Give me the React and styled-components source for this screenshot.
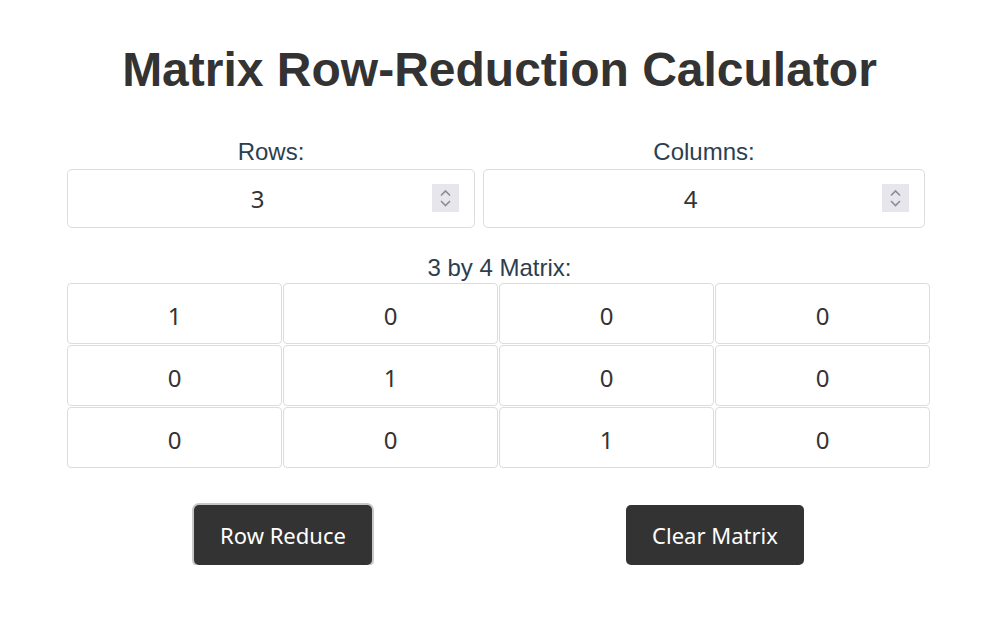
import React, { useState } from 'react';
import styled, { createGlobalStyle } from 'styled-components';

const GlobalStyle = createGlobalStyle`
  body {
    margin: 0;
    background: #fff;
    font-family: 'Liberation Sans', Arial, sans-serif;
  }
`;

const Page = styled.div`
  width: 865px;
  margin: 0 auto;
  padding-top: 42px;
  text-align: center;
  color: #2c3e50;
`;

const Title = styled.h1`
  margin: 0;
  font-size: 48px;
  line-height: 56px;
  font-weight: 700;
  color: #333;
`;

const Controls = styled.div`
  display: grid;
  grid-template-columns: 408px 442px;
  column-gap: 8px;
  margin-top: 43px;
`;

const Field = styled.div`
  display: flex;
  flex-direction: column;
  align-items: center;
  gap: 6px;
`;

const Label = styled.label`
  display: block;
  font-size: 24px;
  line-height: 22px;
  color: #2c3e50;
`;

const SizeBox = styled.div`
  position: relative;
  width: 100%;
`;

const SizeInput = styled.input`
  box-sizing: border-box;
  width: 100%;
  height: 59px;
  padding: 0 39px 0 12px;
  border: 1px solid #dcdcdc;
  border-radius: 5px;
  background: #fff;
  font-family: 'Noto Sans', 'Open Sans', sans-serif;
  font-size: 24px;
  color: #333;
  text-align: center;
  outline: none;
`;

// number spinner drawn over the right end of the input
const Spinner = styled.span`
  position: absolute;
  right: 16px;
  top: 15px;
  width: 27px;
  height: 28px;
  background: #e6e6ec;
  display: flex;
  align-items: center;
  justify-content: center;
`;

const MatrixLabel = styled.div`
  margin-top: 29px;
  margin-bottom: 4px;
  font-size: 24px;
  line-height: 22px;
  color: #2c3e50;
`;

const Grid = styled.div`
  display: grid;
  grid-template-columns: repeat(${(p) => p.cols}, 215px);
  grid-auto-rows: 61px;
  gap: 1px;
`;

const Cell = styled.input`
  box-sizing: border-box;
  width: 100%;
  height: 100%;
  border: 1px solid #dcdcdc;
  border-radius: 4px;
  background: #fff;
  font-family: 'Noto Sans', 'Open Sans', sans-serif;
  font-size: 24px;
  color: #333;
  text-align: center;
  padding: 4px 0 0;
  outline: none;
`;

const Actions = styled.div`
  display: flex;
  width: 864px;
  margin-top: 37px;
`;

const ActionSlot = styled.div`
  flex: 1;
  display: flex;
  justify-content: center;
`;

const Button = styled.button`
  height: 60px;
  padding: 0 26px;
  border: none;
  border-radius: 5px;
  background: #333;
  color: #fff;
  font-family: 'Noto Sans', 'Open Sans', sans-serif;
  font-size: 22px;
  cursor: pointer;
  box-shadow: ${(p) => (p.$focused ? '0 0 0 2px #c8c8c8' : 'none')};
`;

function SpinIcon() {
  return (
    <svg width='27' height='28' viewBox='0 0 27 28'>
      <path
        d='M9 11.5 L13.5 7 L18 11.5 M9 17 L13.5 21.5 L18 17'
        fill='none'
        stroke='#8c8c99'
        strokeWidth='1.6'
      />
    </svg>
  );
}

export default function App() {
  let [rows, setRows] = useState(3);
  let [cols, setCols] = useState(4);
  let [matrix, setMatrix] = useState([
    [1, 0, 0, 0],
    [0, 1, 0, 0],
    [0, 0, 1, 0],
  ]);

  function handleCell(r, c, value) {
    setMatrix((prev) =>
      prev.map((row, i) => row.map((v, j) => (i === r && j === c ? value : v)))
    );
  }

  function handleClear() {
    setMatrix(matrix.map((row) => row.map(() => 0)));
  }

  return (
    <>
      <GlobalStyle />
      <Page>
        <Title>Matrix Row-Reduction Calculator</Title>
        <Controls>
          <Field>
            <Label>Rows:</Label>
            <SizeBox>
              <SizeInput
                type='text'
                value={rows}
                onChange={(e) => setRows(e.target.value)}
              />
              <Spinner>
                <SpinIcon />
              </Spinner>
            </SizeBox>
          </Field>
          <Field>
            <Label>Columns:</Label>
            <SizeBox>
              <SizeInput
                type='text'
                value={cols}
                onChange={(e) => setCols(e.target.value)}
              />
              <Spinner>
                <SpinIcon />
              </Spinner>
            </SizeBox>
          </Field>
        </Controls>
        <MatrixLabel>
          {rows} by {cols} Matrix:
        </MatrixLabel>
        <Grid cols={4}>
          {matrix.map((row, r) =>
            row.map((v, c) => (
              <Cell
                key={r + '-' + c}
                type='text'
                value={v}
                onChange={(e) => handleCell(r, c, e.target.value)}
              />
            ))
          )}
        </Grid>
        <Actions>
          <ActionSlot>
            <Button $focused>Row Reduce</Button>
          </ActionSlot>
          <ActionSlot>
            <Button onClick={handleClear}>Clear Matrix</Button>
          </ActionSlot>
        </Actions>
      </Page>
    </>
  );
}
